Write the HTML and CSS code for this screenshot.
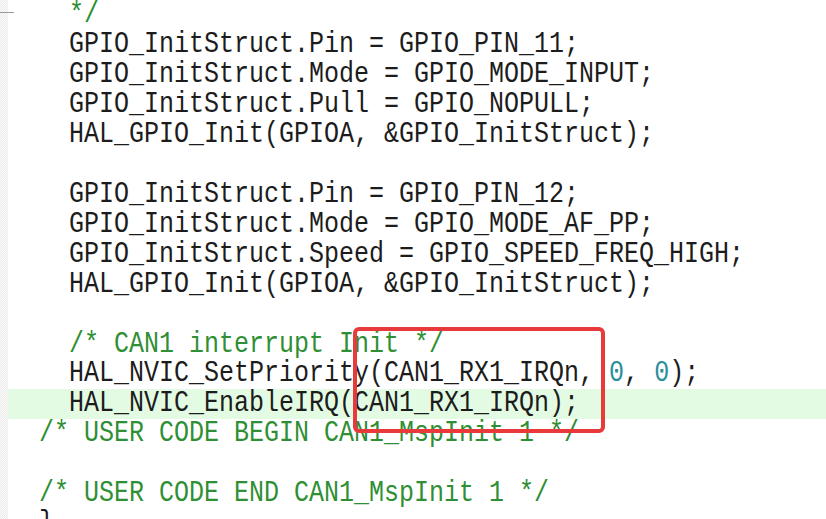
FILE: index.html
```html
<!DOCTYPE html>
<html>
<head>
<meta charset="utf-8">
<link rel="stylesheet" href="styles.css">
</head>
<body>
<div class="editor">
  <div class="gutter"><div class="fold-mark"></div></div>
  <div class="code">
    <div class="line"><span class="t"><span class="cm">  */</span></span></div>
    <div class="line"><span class="t">  GPIO_InitStruct.Pin = GPIO_PIN_11;</span></div>
    <div class="line"><span class="t">  GPIO_InitStruct.Mode = GPIO_MODE_INPUT;</span></div>
    <div class="line"><span class="t">  GPIO_InitStruct.Pull = GPIO_NOPULL;</span></div>
    <div class="line"><span class="t">  HAL_GPIO_Init(GPIOA, &amp;GPIO_InitStruct);</span></div>
    <div class="line"><span class="t"> </span></div>
    <div class="line"><span class="t">  GPIO_InitStruct.Pin = GPIO_PIN_12;</span></div>
    <div class="line"><span class="t">  GPIO_InitStruct.Mode = GPIO_MODE_AF_PP;</span></div>
    <div class="line"><span class="t">  GPIO_InitStruct.Speed = GPIO_SPEED_FREQ_HIGH;</span></div>
    <div class="line"><span class="t">  HAL_GPIO_Init(GPIOA, &amp;GPIO_InitStruct);</span></div>
    <div class="line"><span class="t"> </span></div>
    <div class="line"><span class="t">  <span class="cm">/* CAN1 interrupt Init */</span></span></div>
    <div class="line"><span class="t">  HAL_NVIC_SetPriority(CAN1_RX1_IRQn, <span class="num">0</span>, <span class="num">0</span>);</span></div>
    <div class="line current"><span class="t">  HAL_NVIC_EnableIRQ(CAN1_RX1_IRQn);</span></div>
    <div class="line"><span class="t"><span class="cm">/* USER CODE BEGIN CAN1_MspInit 1 */</span></span></div>
    <div class="line"><span class="t"> </span></div>
    <div class="line"><span class="t"><span class="cm">/* USER CODE END CAN1_MspInit 1 */</span></span></div>
    <div class="line"><span class="t">}</span></div>
  </div>
  <div class="mark-box"></div>
</div>
</body>
</html>
```
FILE: styles.css
```css
html, body {
  margin: 0;
  padding: 0;
  background: #ffffff;
  overflow: hidden;
}

.editor {
  position: relative;
  display: flex;
  width: 826px;
  height: 519px;
  overflow: hidden;
}

.gutter {
  width: 8px;
  flex: none;
  background-color: #f6f6f6;
  background-image: repeating-conic-gradient(#ececec 0 25%, #fafafa 0 50%);
  background-size: 2px 2px;
}

.fold-mark {
  margin-top: 12px;
  width: 14px;
  height: 1px;
  background: #9a9a9a;
}

.code {
  flex: 1;
  font-family: "Liberation Mono", monospace;
  font-size: 25px;
  color: #1c1c1c;
}

.line {
  height: 29.93px;
  line-height: 29.93px;
  padding-left: 31px;
  white-space: pre;
}

.line.current {
  background: #e3fbe3;
}

.t {
  display: inline-block;
  line-height: 24px;
  vertical-align: -1.4px;
  transform: scaleY(1.2);
  transform-origin: 0 18.7px;
  white-space: pre;
}

.cm {
  color: #2f8f35;
}

.num {
  color: #2b8e9c;
}

.mark-box {
  position: absolute;
  left: 353px;
  top: 327px;
  width: 252px;
  height: 106px;
  box-sizing: border-box;
  border: 4px solid #e8393b;
  border-radius: 6px;
}
```
